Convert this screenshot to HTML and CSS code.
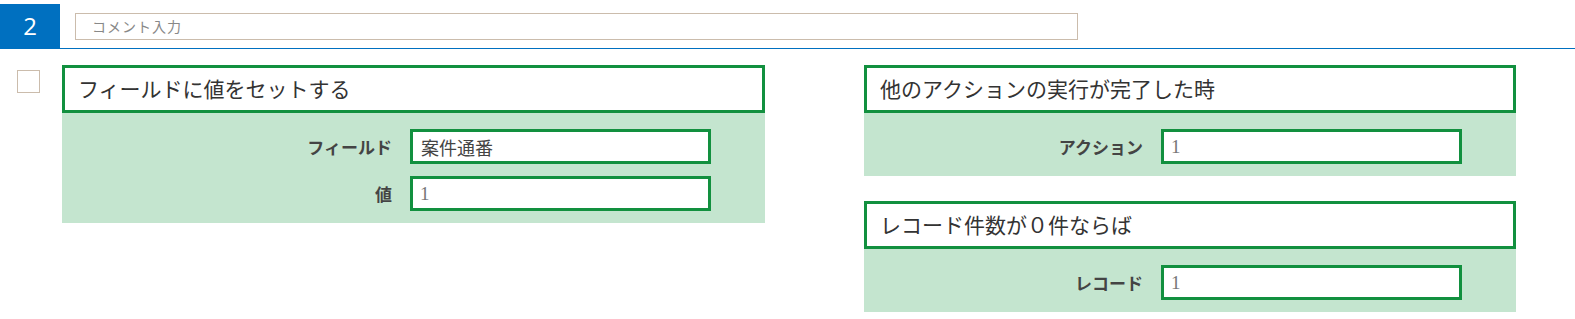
FILE: index.html
```html
<!DOCTYPE html>
<html lang="ja">
<head>
  <meta charset="UTF-8">
  <meta name="viewport" content="width=device-width, initial-scale=1.0">
  <title>ルール編集</title>
  <link rel="stylesheet" href="styles.css">
</head>
<body>
  <header class="rule-head">
    <div class="rule-no">2</div>
    <input class="comment" type="text" placeholder="コメント入力">
  </header>

  <main class="rule-body">
    <div class="check-col">
      <span class="check"></span>
    </div>

    <div class="col col-left">
      <div class="card">
        <div class="card-title">フィールドに値をセットする</div>
        <div class="card-fields">
          <div class="field-row">
            <label>フィールド</label>
            <input type="text" value="案件通番">
          </div>
          <div class="field-row">
            <label>値</label>
            <input class="num" type="text" value="1">
          </div>
        </div>
      </div>
    </div>

    <div class="col col-right">
      <div class="card">
        <div class="card-title">他のアクションの実行が完了した時</div>
        <div class="card-fields">
          <div class="field-row">
            <label>アクション</label>
            <input class="num" type="text" value="1">
          </div>
        </div>
      </div>

      <div class="card">
        <div class="card-title">レコード件数が０件ならば</div>
        <div class="card-fields">
          <div class="field-row">
            <label>レコード</label>
            <input class="num" type="text" value="1">
          </div>
        </div>
      </div>
    </div>
  </main>
</body>
</html>
```

FILE: styles.css
```css
body {
  margin: 0;
  padding: 0;
  background: #fff;
  font-family: "Noto Sans CJK JP", "Noto Sans", sans-serif;
  color: #333;
}

.rule-head {
  display: flex;
  align-items: center;
  padding-top: 4px;
  border-bottom: 1px solid #0070c0;
}
.rule-no {
  width: 60px;
  height: 44px;
  background: #0070c0;
  color: #fff;
  font-family: "Open Sans", sans-serif;
  font-size: 24px;
  line-height: 44px;
  text-align: center;
}
.comment {
  box-sizing: border-box;
  width: 1003px;
  height: 27px;
  margin-left: 15px;
  padding: 0 16px;
  border: 1px solid #cbbcac;
  font-family: "Noto Sans CJK JP", sans-serif;
  font-size: 14px;
  letter-spacing: 1px;
  outline: none;
}
.comment::placeholder {
  color: #888;
}

.rule-body {
  display: flex;
  align-items: flex-start;
  padding-top: 16px;
}
.check-col {
  width: 62px;
}
.check {
  display: block;
  box-sizing: border-box;
  width: 23px;
  height: 23px;
  margin: 5px 0 0 17px;
  border: 1px solid #cbbcac;
  background: #fff;
}

.col {
  display: flex;
  flex-direction: column;
  gap: 25px;
}
.col-left {
  width: 703px;
}
.col-right {
  width: 652px;
  margin-left: 99px;
}

.card {
  background: #c4e5cf;
}
.card-title {
  box-sizing: border-box;
  height: 48px;
  padding-left: 13px;
  border: 3px solid #12903f;
  background: #fff;
  font-size: 21px;
  line-height: 41px;
  color: #333;
}
.card-fields {
  display: flex;
  flex-direction: column;
  gap: 12px;
  padding: 16px 0 12px;
}
.field-row {
  display: flex;
  justify-content: flex-end;
  align-items: center;
  padding-right: 54px;
}
.field-row label {
  margin-right: 18px;
  font-size: 17px;
  font-weight: bold;
  color: #444;
}
.field-row input {
  box-sizing: border-box;
  width: 301px;
  height: 35px;
  padding: 0 8px;
  border: 3px solid #12903f;
  background: #fff;
  font-family: "Noto Sans CJK JP", sans-serif;
  font-size: 18px;
  color: #444;
  outline: none;
}
.field-row input.num {
  padding-left: 7px;
  font-family: "Liberation Serif", serif;
  font-size: 19px;
  color: #777;
}
```
